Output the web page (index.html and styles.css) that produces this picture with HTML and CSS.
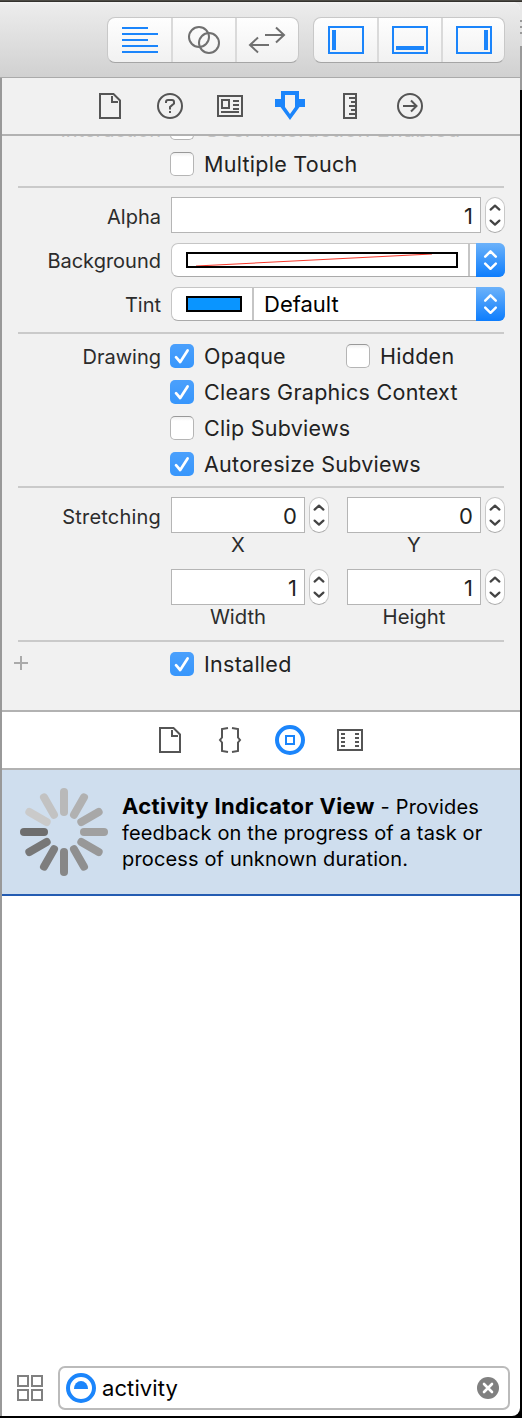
FILE: index.html
```html
<!DOCTYPE html>
<html lang="en">
<head>
<meta charset="utf-8">
<title>Inspector</title>
<link rel="stylesheet" href="styles.css">
</head>
<body>
<svg class="defs" width="0" height="0">
  <defs>
    <symbol id="file" viewBox="0 0 30 30"><path d="M5 3H18.500L25 9.500V27H5Z M17 5V11H23" fill="none" stroke="currentColor" stroke-width="2"/></symbol>
    <symbol id="tick" viewBox="0 0 24 24"><path d="M6 13.2L10.2 18L17.6 6.4" fill="none" stroke="#fff" stroke-width="2.7" stroke-linecap="round" stroke-linejoin="round"/></symbol>
    <symbol id="steps" viewBox="1 1 18 34"><path d="M5.6 12.6L10 8.6L14.4 12.6M5.6 23.6L10 27.6L14.4 23.6" fill="none" stroke="#444" stroke-width="2.2" stroke-linecap="round" stroke-linejoin="round"/></symbol>
    <symbol id="updown" viewBox="0 0 29 34"><path d="M9.2 13.6L14.5 8.4L19.8 13.6M9.2 20.6L14.5 25.8L19.8 20.6" fill="none" stroke="#fff" stroke-width="2.5" stroke-linecap="round" stroke-linejoin="round"/></symbol>
  </defs>
</svg>
<div class="desktop">
<div class="window">
  <header class="toolbar">
    <div class="segments">
      <span class="segment on"><svg width="40" height="30" viewBox="0 0 40 30"><path d="M2 3H28M2 9H38M2 15H28M2 21H38M2 27H38" stroke="currentColor" stroke-width="2"/></svg></span>
      <span class="segment"><svg width="40" height="34" viewBox="0 0 40 34"><g fill="none" stroke="currentColor" stroke-width="2"><circle cx="15" cy="14" r="10"/><circle cx="25" cy="20" r="10"/></g></svg></span>
      <span class="segment"><svg width="40" height="30" viewBox="0 0 40 30"><path d="M18 10H37M29 2.500L37 10L29 17.500M22 20H3M11 12.500L3 20L11 27.500" fill="none" stroke="currentColor" stroke-width="2"/></svg></span>
    </div>
    <div class="segments">
      <span class="segment on"><svg width="36" height="28" viewBox="0 0 36 28"><rect x="1" y="1" width="34" height="26" fill="none" stroke="currentColor" stroke-width="2"/><rect x="4" y="4" width="4" height="20" fill="currentColor"/></svg></span>
      <span class="segment on"><svg width="36" height="28" viewBox="0 0 36 28"><rect x="1" y="1" width="34" height="26" fill="none" stroke="currentColor" stroke-width="2"/><rect x="4" y="20" width="28" height="4" fill="currentColor"/></svg></span>
      <span class="segment on last"><svg width="36" height="28" viewBox="0 0 36 28"><rect x="1" y="1" width="34" height="26" fill="none" stroke="currentColor" stroke-width="2"/><rect x="28" y="4" width="4" height="20" fill="currentColor"/></svg></span>
    </div>
  </header>
  <div class="panel">
    <nav class="tabs">
      <svg class="tab"><use href="#file"/></svg>
      <svg class="tab" viewBox="0 0 30 30"><circle cx="15" cy="15" r="12" fill="none" stroke="currentColor" stroke-width="2"/><path d="M11 12V11Q11 9 13 9H17Q19 9 19 11V12.500L15 16V18.500" fill="none" stroke="currentColor" stroke-width="2"/><rect x="14" y="20" width="2" height="2" fill="currentColor"/></svg>
      <svg class="tab" viewBox="0 0 30 30"><path d="M3 5H27V25H3Z M7 9H14V17H7Z M18 10H24M18 14H24M18 18H24M6 21H24" fill="none" stroke="currentColor" stroke-width="2"/></svg>
      <svg class="tab on" viewBox="0 0 30 30"><path d="M0 8H6V0H24V8H30V16H24.500L15 29L5.500 16H0Z M10 4V16L15 23L20 16V4Z" fill="currentColor" fill-rule="evenodd"/></svg>
      <svg class="tab" viewBox="0 0 30 30"><path d="M9 3H21V27H9Z M14 7H20M16 11H20M14 15H20M16 19H20M14 23H20" fill="none" stroke="currentColor" stroke-width="2"/></svg>
      <svg class="tab" viewBox="0 0 30 30"><circle cx="15" cy="15" r="12" fill="none" stroke="currentColor" stroke-width="2"/><path d="M8 15H21M16 9.500L21.500 15L16 20.500" fill="none" stroke="currentColor" stroke-width="2"/></svg>
    </nav>
    <section class="inspector">
      <div class="group first">
        <div class="row"><span class="label lower faded">Interaction</span><span class="box"></span><span class="text scrolled faded">User Interaction Enabled</span></div>
        <div class="row"><span class="label"></span><span class="box"></span><span class="text">Multiple Touch</span></div>
      </div>
      <div class="group fields">
        <div class="row"><span class="label lower">Alpha</span><span class="field">1</span><svg class="stepper"><use href="#steps"/></svg></div>
        <div class="row"><span class="label">Background</span>
          <div class="popup"><span class="well wide"><svg width="268" height="12"><path d="M8 12L244 0" stroke="#f43a2c" stroke-width="1.100"/></svg></span><i class="rule"></i><svg class="arrows"><use href="#updown"/></svg></div></div>
        <div class="row"><span class="label">Tint</span>
          <div class="popup"><span class="well tint"></span><i class="rule"></i><span class="value">Default</span><svg class="arrows"><use href="#updown"/></svg></div></div>
      </div>
      <div class="group checks">
        <div class="row"><span class="label">Drawing</span><span class="box checked"><svg><use href="#tick"/></svg></span><span class="text half">Opaque</span><span class="box"></span><span class="text">Hidden</span></div>
        <div class="row"><span class="label"></span><span class="box checked"><svg><use href="#tick"/></svg></span><span class="text">Clears Graphics Context</span></div>
        <div class="row"><span class="label"></span><span class="box"></span><span class="text">Clip Subviews</span></div>
        <div class="row"><span class="label"></span><span class="box checked"><svg><use href="#tick"/></svg></span><span class="text">Autoresize Subviews</span></div>
      </div>
      <div class="group stretch">
        <span class="label">Stretching</span>
        <div class="quad">
          <div class="cell"><span class="field">0</span><svg class="stepper"><use href="#steps"/></svg><span class="caption">X</span></div>
          <div class="cell"><span class="field">0</span><svg class="stepper"><use href="#steps"/></svg><span class="caption">Y</span></div>
          <div class="cell"><span class="field">1</span><svg class="stepper"><use href="#steps"/></svg><span class="caption">Width</span></div>
          <div class="cell"><span class="field">1</span><svg class="stepper"><use href="#steps"/></svg><span class="caption">Height</span></div>
        </div>
      </div>
      <div class="group checks">
        <div class="row"><span class="label"><svg class="plus" width="14" height="14"><path d="M7 0V14M0 7H14" stroke="#aaa" stroke-width="2"/></svg></span><span class="box checked"><svg><use href="#tick"/></svg></span><span class="text">Installed</span></div>
      </div>
    </section>
    <nav class="tabs library">
      <svg class="tab"><use href="#file"/></svg>
      <svg class="tab" viewBox="0 0 30 30"><path d="M13 3L7 4V12.500L5 15L7 17.500V26L13 27M17 3L23 4V12.500L25 15L23 17.500V26L17 27" fill="none" stroke="currentColor" stroke-width="2"/></svg>
      <svg class="tab on" viewBox="0 0 30 30"><circle cx="15" cy="15" r="13" fill="none" stroke="currentColor" stroke-width="4"/><rect x="11" y="11" width="8" height="8" fill="none" stroke="currentColor" stroke-width="2"/></svg>
      <svg class="tab" viewBox="0 0 30 30"><path d="M3 5H27V25H3Z M6 9H10M6 13H10M6 17H10M6 21H10M20 9H24M20 13H24M20 17H24M20 21H24" fill="none" stroke="currentColor" stroke-width="2"/></svg>
    </nav>
    <article class="item">
      <svg class="spinner" width="88" height="88" viewBox="-44 -44 88 88" stroke-width="8" stroke-linecap="round">
        <path d="M0-20V-40" stroke="#b9b9b9"/>
        <path d="M0-20V-40" stroke="#b1b1b1" transform="rotate(30)"/>
        <path d="M0-20V-40" stroke="#a8a8a8" transform="rotate(60)"/>
        <path d="M0-20V-40" stroke="#a0a0a0" transform="rotate(90)"/>
        <path d="M0-20V-40" stroke="#989898" transform="rotate(120)"/>
        <path d="M0-20V-40" stroke="#8f8f8f" transform="rotate(150)"/>
        <path d="M0-20V-40" stroke="#878787" transform="rotate(180)"/>
        <path d="M0-20V-40" stroke="#7e7e7e" transform="rotate(210)"/>
        <path d="M0-20V-40" stroke="#777" transform="rotate(240)"/>
        <path d="M0-20V-40" stroke="#6e6e6e" transform="rotate(270)"/>
        <path d="M0-20V-40" stroke="#cacaca" transform="rotate(300)"/>
        <path d="M0-20V-40" stroke="#c2c2c2" transform="rotate(330)"/>
      </svg>
      <p class="about"><b>Activity Indicator View</b> - Provides<br>feedback on the progress of a task or<br>process of unknown duration.</p>
    </article>
    <div class="results"></div>
    <footer class="filter">
      <svg width="26" height="26"><path d="M1 1H11V11H1Z M15 1H25V11H15Z M1 15H11V25H1Z M15 15H25V25H15Z" fill="none" stroke="#808080" stroke-width="2"/></svg>
      <div class="search">
        <svg width="30" height="30"><circle cx="15" cy="15" r="13" fill="none" stroke="#1b85fb" stroke-width="4"/><path d="M8 16A7 8 0 0 1 22 16Z" fill="#1b85fb"/></svg>
        <span class="query">activity</span>
        <svg width="22" height="22"><circle cx="11" cy="11" r="11" fill="#808080"/><path d="M7 7L15 15M15 7L7 15" stroke="#fff" stroke-width="2.600" stroke-linecap="round"/></svg>
      </div>
    </footer>
  </div>
</div>
</div>
</body>
</html>
```
FILE: styles.css
```css
* { box-sizing: border-box; }
body { margin: 0; font-family: Inter, "Liberation Sans", sans-serif; color: #222; white-space: nowrap; }
svg { display: block; flex: none; }
.defs { position: absolute; }
.desktop {
  width: 522px; height: 1418px; padding: 2px 2px 2px 0;
  background: linear-gradient(#4c4a45 0 1px, #34322e 1px 2px, #e8e8e8 2px 20px, #999 20px 22px, #e5e5e5 22px 26px, #999 26px 28px, #e5e5e5 28px 32px, #999 32px 34px, #ddd 34px 46px, #999 46px 90px, #000 90px);
}
.window { height: 1414px; display: flex; flex-direction: column; border-radius: 0 8px 8px 0; overflow: hidden; background: #fff; }
.toolbar {
  height: 76px; flex: none; display: flex; gap: 14px; padding: 15px 15px 0 107px;
  background: linear-gradient(#f4f4f4, #ececec 3px, #d1d1d1 74px); border-bottom: 1px solid #aaa;
}
.segments { width: 192px; height: 46px; display: grid; grid-template-columns: repeat(3, 1fr); border: 1px solid #c8c8c8; border-bottom-color: #a5a5a5; border-radius: 8px; background: linear-gradient(#fefefe, #f1f1f1); }
.segment { display: flex; align-items: center; justify-content: center; color: #707070; }
.segment + .segment { border-left: 2px solid #dadada; }
.segment.on { color: #1b85fb; }
.segment.last { padding-left: 1px; }
.panel { flex: 1; display: flex; flex-direction: column; border-left: 2px solid #999; }
.tabs { height: 58px; flex: none; display: flex; align-items: center; gap: 30px; padding-left: 93px; color: #555; background: #f1f1f1; border-bottom: 2px solid #b2b2b2; }
.tab { width: 30px; height: 30px; }
.tab.on { color: #1b85fb; }
.library { padding-left: 153px; background: #fff; }
.inspector { height: 576px; flex: none; padding: 0 16px; overflow: hidden; background: #f1f1f1; border-bottom: 2px solid #b2b2b2; }
.group + .group { border-top: 2px solid #cacaca; }
.group { display: flex; flex-direction: column; }
.first { margin-top: -20px; gap: 12px; padding-bottom: 10px; }
.row { display: flex; align-items: center; }
.label { width: 143px; height: 24px; padding-top: 1px; margin-right: 9px; flex: none; text-align: right; font-size: 20px; line-height: 24px; color: #2c2c2c; }
.lower { padding-top: 2px; }
.box { width: 24px; height: 24px; flex: none; border: 1px solid #b5b5b5; border-top-color: #999; border-radius: 5px; background: linear-gradient(#f0f0f0, #fff 4px); margin-right: 10px; }
.checked { border: 0; background: linear-gradient(#4ba0fc, #3796fc); }
.checked svg { width: 24px; height: 24px; }
.text { font-size: 21.5px; line-height: 24px; letter-spacing: .27px; }
.scrolled { height: 24px; padding-top: 1px; }
.faded { color: #c4c4c4; }
.half { width: 142px; }
.fields { gap: 10px; padding: 9px 0 11px; }
.field { flex: 1; height: 36px; padding-right: 7px; background: #fff; border: 1px solid #b5b5b5; text-align: right; font-size: 22px; line-height: 37px; }
.fields .field { margin-left: 1px; }
.stepper { width: 20px; height: 36px; margin-left: 4px; margin-right: -1px; border: 1px solid #c8c8c8; border-bottom-color: #aaa; border-radius: 10px; background: #fff; }
.popup { width: 334px; height: 34px; margin: 0 -1px 0 1px; flex: none; display: flex; align-items: center; padding-left: 14px; border: 1px solid #c5c5c5; border-bottom-color: #aaa; border-right: 0; border-radius: 7px; background: #fff; }
.well { height: 16px; border: 2px solid #000; }
.wide { width: 272px; }
.tint { width: 56px; background: #0a95ff; }
.rule { width: 2px; height: 32px; margin-left: 10px; background: #c5c5c5; }
.value { margin-left: 10px; font-size: 22px; line-height: 32px; color: #000; }
.arrows { width: 29px; height: 34px; margin-left: auto; border-radius: 0 6px 6px 0; background: linear-gradient(#6cb2fa, #0d7dfd); }
.checks { gap: 12px; padding: 10px 0; }
.stretch { flex-direction: row; padding-top: 9px; height: 154px; }
.stretch .label { margin: 7px 10px 0 0; letter-spacing: .2px; }
.quad { display: grid; grid-template-columns: 158px 158px; column-gap: 18px; grid-auto-rows: 72px; }
.cell { display: grid; grid-template-columns: 134px 20px; column-gap: 4px; grid-template-rows: 36px 24px; }
.cell .stepper { margin: 0; }
.caption { text-align: center; font-size: 20.3px; line-height: 24px; color: #2c2c2c; }
.plus { margin: 3px 0 0 -4px; }
.item { height: 126px; flex: none; display: flex; padding: 18px 0 0 18px; gap: 14px; background: #cfdeee; border-bottom: 2px solid #245cb2; color: #000; }
.about { margin: 5px 0 0; font-size: 20px; line-height: 26px; letter-spacing: .15px; }
.about b { font-size: 22px; font-weight: 700; letter-spacing: .38px; }
.results { flex: 1; }
.filter { height: 56px; display: flex; align-items: center; gap: 15px; padding: 0 10px 0 15px; }
.search { flex: 1; height: 44px; display: flex; align-items: center; padding: 0 9px 0 6px; border: 2px solid #bbb; border-radius: 7px; }
.query { flex: 1; margin-left: 6px; font-size: 22px; letter-spacing: .1px; color: #000; }
```
